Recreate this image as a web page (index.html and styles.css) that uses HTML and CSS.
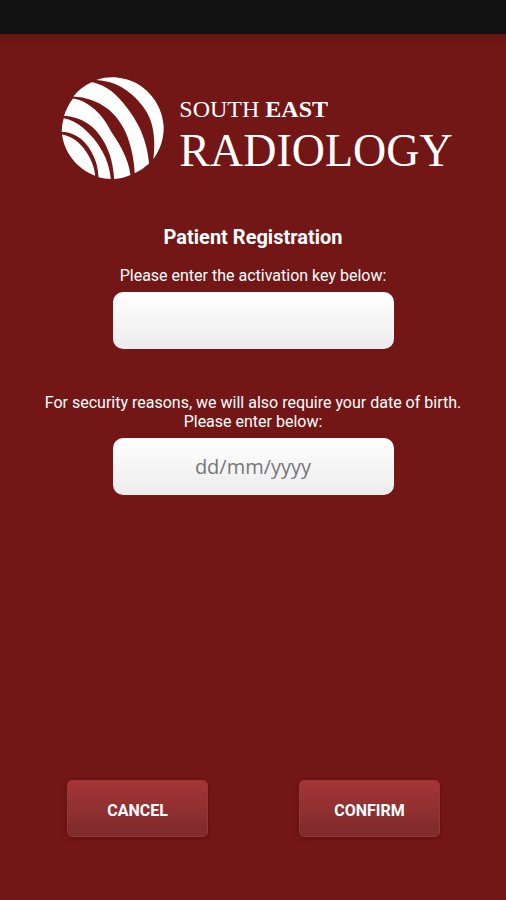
FILE: index.html
```html
<!DOCTYPE html>
<html lang="en">
<head>
<meta charset="utf-8">
<meta name="viewport" content="width=device-width, initial-scale=1">
<title>Patient Registration</title>
<link rel="stylesheet" href="styles.css">
</head>
<body>
<div class="status-bar"></div>
<main class="screen">
  <div class="brand">
    <svg class="brand-mark" viewBox="35 37 310 308" aria-hidden="true">
      <path d="M141 45C165 37 187 36 207 38C282 45 340 110 344 185C345 221 334 254 313 283C318 246 316 218 311 190C305 160 293 138 276 118C240 72 195 48 141 45Z"/>
      <path d="M72 95C87 76 105 62 127 52C153 56 170 68 186 78C222 107 252 150 271 188C286 220 296 255 300 296Q280 315 257 326C255 280 243 225 221 186C206 160 193 146 174 131C145 109 110 97 72 95Z"/>
      <path d="M44 153Q54 123 71 101C95 105 113 115 128 127C150 143 168 166 184 197C210 236 238 280 244 331Q222 342 195 343C192 302 185 270 166 234C137 180 94 157 44 153Z"/>
      <path d="M37 201Q37 182 43 160C64 164 85 174 101 189C126 210 146 235 160 261C174 286 182 313 185 343Q166 343 148 338C146 312 143 297 136 281C115 229 80 203 37 201Z"/>
      <path d="M38 209C64 214 84 227 102 249C122 275 135 303 138 333C88 315 46 269 38 209Z"/>
    </svg>
    <div class="brand-name">
      <span class="brand-top">SOUTH <b>EAST</b></span>
      <span class="brand-main">RADIOLOGY</span>
    </div>
  </div>
  <form class="form">
    <h1 class="title">Patient Registration</h1>
    <div class="field">
      <label for="key">Please enter the activation key below:</label>
      <input id="key" type="text">
    </div>
    <div class="field">
      <label for="dob">For security reasons, we will also require your date of birth. Please enter below:</label>
      <input id="dob" type="text" placeholder="dd/mm/yyyy">
    </div>
    <div class="actions">
      <button type="button">CANCEL</button>
      <button type="submit">CONFIRM</button>
    </div>
  </form>
</main>
</body>
</html>
```
FILE: styles.css
```css
* {
  box-sizing: border-box;
}

body {
  margin: 0;
  min-height: 100vh;
  display: flex;
  flex-direction: column;
  background: #731616;
  color: #fff;
  font-family: Roboto, "Liberation Sans", sans-serif;
  font-size: 16px;
}

.status-bar {
  height: 34px;
  background: #111;
}

.screen {
  flex: 1;
  display: flex;
  flex-direction: column;
  padding: 43px 40px 63px;
  background: linear-gradient(#641412, #731616 12px);
}

.brand {
  display: flex;
  justify-content: center;
  gap: 15px;
  margin-bottom: 44px;
  padding-left: 8px;
}

.brand-mark {
  width: 103px;
  height: 103px;
  fill: #fff;
}

.brand-name {
  display: flex;
  flex-direction: column;
  padding-top: 18px;
  font-family: "Liberation Serif", serif;
}

.brand-top {
  font-size: 24px;
  line-height: 28px;
}

.brand-main {
  font-size: 46px;
  line-height: 56px;
}

.form {
  flex: 1;
  display: flex;
  flex-direction: column;
}

.title {
  margin: 0 0 16px;
  font-size: 20px;
  line-height: 26px;
  text-align: center;
}

.field {
  display: flex;
  flex-direction: column;
  align-items: center;
  gap: 7px;
  margin-bottom: 44px;
}

.field label {
  line-height: 19px;
  text-align: center;
}

.field input {
  width: 281px;
  height: 57px;
  padding: 0 16px;
  border: 0;
  border-radius: 10px;
  background: linear-gradient(#fff, #ececec);
  color: #333;
  font-family: "Open Sans", Roboto, sans-serif;
  font-size: 20px;
  text-align: center;
}

.field input::placeholder {
  color: #777;
  opacity: 1;
}

.actions {
  display: flex;
  justify-content: space-between;
  margin-top: auto;
  padding: 0 26px 0 27px;
}

.actions button {
  width: 141px;
  height: 57px;
  padding: 4px 0 0;
  border: 1px solid #983536;
  border-radius: 5px;
  background: linear-gradient(#a53536, #7d2a2b);
  box-shadow: 0 1px 4px #5a1010;
  color: #fff;
  font-family: inherit;
  font-size: 16px;
  font-weight: 700;
}
```
